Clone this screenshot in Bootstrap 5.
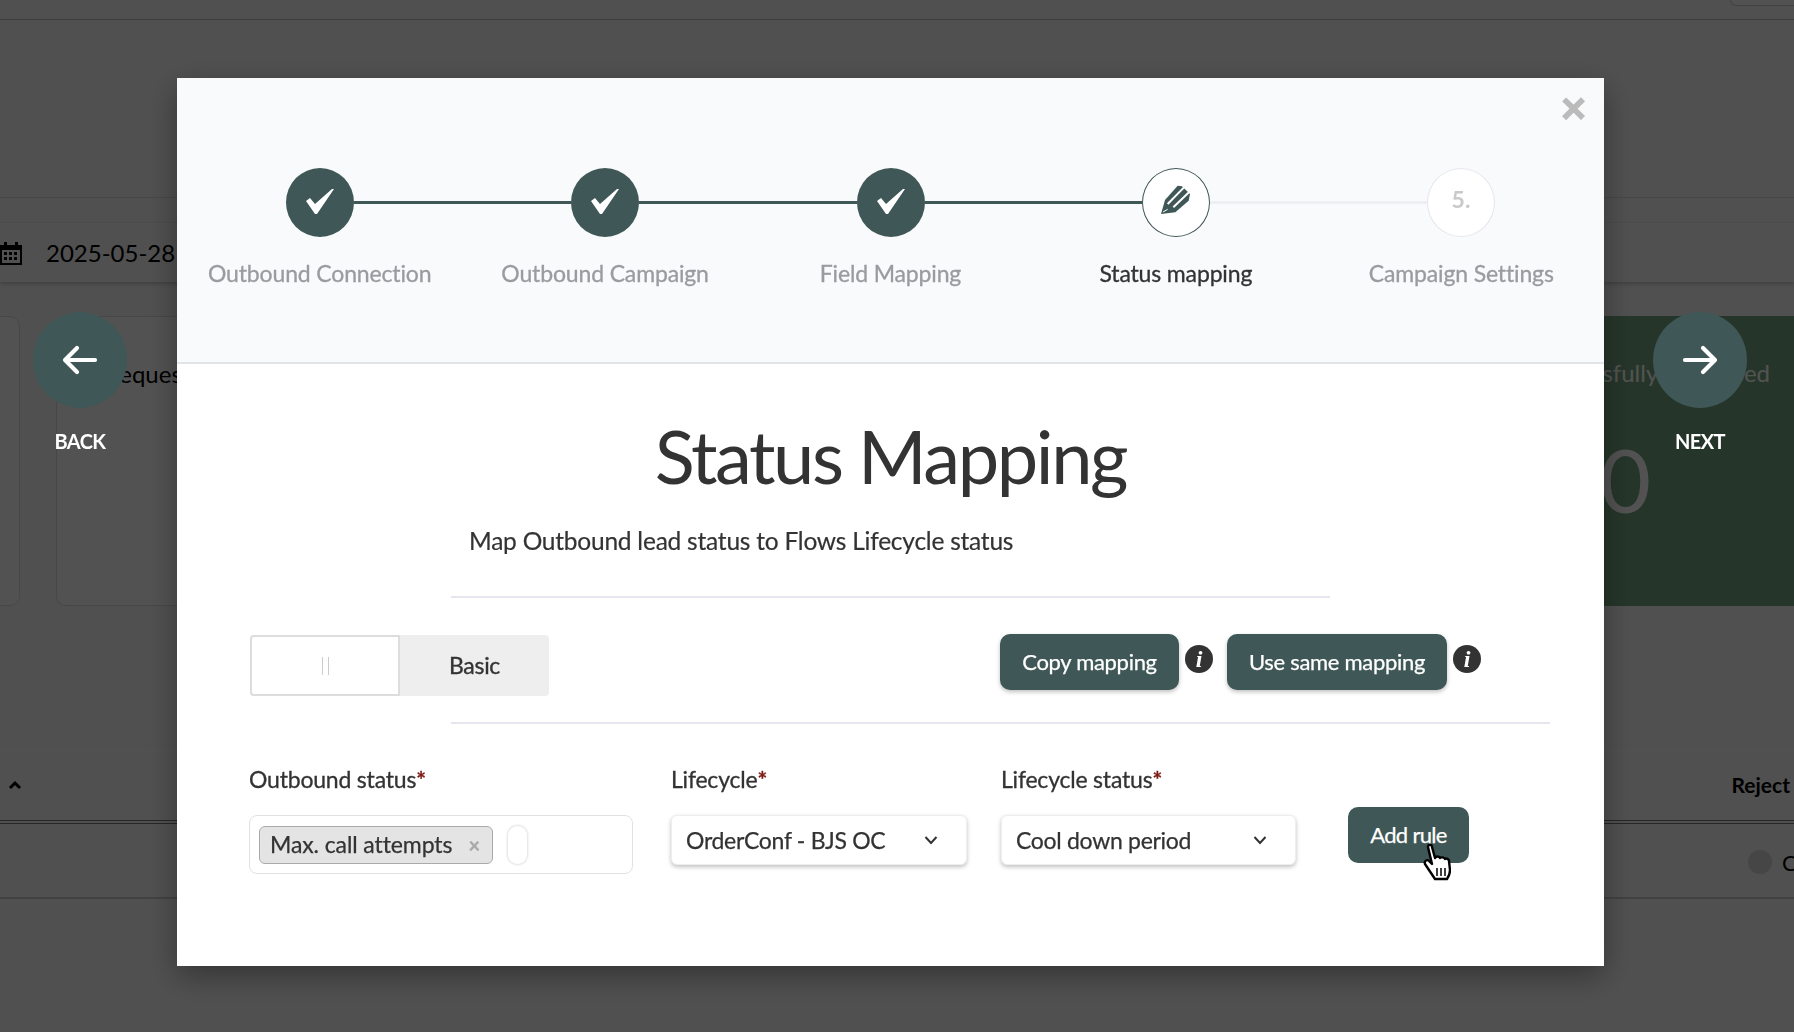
<!DOCTYPE html>
<html lang="en">
<head>
<meta charset="utf-8">
<title>Status Mapping</title>
<link href="https://cdn.jsdelivr.net/npm/bootstrap@5.3.0/dist/css/bootstrap.min.css" rel="stylesheet">
<style>
html,body{height:100%;overflow:hidden}
body{font-family:"Lato","Liberation Sans",sans-serif;background:#f7f7f7;color:#333}
.bg-top{height:20px;border-bottom:1px solid #bbb}
.bg-chip{width:80px;height:6px;margin-left:1730px;background:#fff;border:1px solid #ccc;border-top:0;border-radius:0 0 0 10px}
.bg-gap1{height:178px;border-bottom:1px solid #ddd}
.bg-gap2{height:25px;border-bottom:1px solid #f0f0f0}
.bg-date{height:59px;gap:24px;box-shadow:0 2px 4px rgba(0,0,0,.2);color:#000;font-size:24px}
.bg-cards{height:290px;margin-top:34px;gap:36px}
.bg-card{background:#fff;border:1px solid #ddd;border-radius:10px;height:290px;font-size:24px;color:#000}
.bg-a{width:120px;margin-left:-100px}
.bg-b{width:400px;padding:39px 0 0 48px}
.bg-c{width:500px;margin-left:auto;margin-right:-10px;background:#76a683;border:0;border-radius:10px 0 0 10px;color:#fff;text-align:right;padding:39px 34px 0 0}
.bg-zero{font-size:88px;line-height:1;padding:44px 119px 0 0}
.bg-thead{margin-top:144px;height:74px;border-top:1px solid #fff;border-bottom:4px double #777;color:#000;font-size:21px;font-weight:700;padding:0 4px 2px 8px}
.bg-tr{height:75px;border-bottom:2px solid #ccc;padding:3px 0 0 1748px;gap:10px;font-size:22px;color:#000}
.bg-dot{width:24px;height:24px;border-radius:50%;background:#d8d8d8;flex:none}
.modal-backdrop.show.dim{background:#000;opacity:.68}

.wiz-side{position:absolute;top:312px;width:94px;color:#fff;text-align:center;z-index:1056;font-size:20px;font-weight:700;letter-spacing:-.6px}
.wiz-back{left:33px}.wiz-next{left:1653px}
.wiz-disc{width:94px;height:96px;border-radius:50%;background:#3f5756;margin-bottom:18px}

.wiz-dialog{width:1427px;max-width:none;margin:78px 0 0 177px}
.wiz-panel{background:#fff;height:888px;box-shadow:0 10px 30px rgba(0,0,0,.35);position:relative}
.wiz-close{position:absolute;top:9px;right:18px;font-size:43px;line-height:1;color:#bbb;font-weight:700;background:none;border:0;padding:0;font-family:"Liberation Sans",sans-serif;-webkit-text-stroke:1px #bbb}
.wiz-head{background:#f9fafc;height:286px;border-bottom:2px solid #e3e3ea;padding-top:90px}
.wiz-track{padding:0 109px}
.wiz-node{width:68px;height:69px;border-radius:50%;flex:none;background:#3f5756}
.wiz-node svg.tick{margin-bottom:3px}
.wiz-node svg.pen{margin-bottom:6px}
.wiz-node.cur{background:#fff;border:1px solid #3f5756}
.wiz-node.todo{background:#fff;border:1px solid #e6e6ee;color:#c9c9c9;font-weight:700;font-size:23px;padding-bottom:6px}
.wiz-line{flex:1;height:3px;background:#3f5756}
.wiz-line.off{background:#eeeff2}
.wiz-labels{margin-top:22px}
.wiz-lab{width:20%;text-align:center;font-size:23px;line-height:28px;color:#9b9b9f;letter-spacing:-.15px;-webkit-text-stroke:.3px currentColor}
.wiz-lab.cur{color:#333}

.wiz-title{font-size:74px;line-height:84px;font-weight:400;text-align:center;color:#333;margin:50px 0 0;letter-spacing:-2.4px}
.wiz-desc{font-size:24.5px;line-height:30px;margin:28px 0 0 292px;letter-spacing:-.23px;color:#333;-webkit-text-stroke:.2px currentColor}
.wiz-rule{border-top:2px solid #e6e6ee;margin:40px 0 0 274px;width:879px}
.wiz-rule.wide{width:1099px;margin-top:25px}
.wiz-tools{margin:37px 0 0 73px;height:62px}
.wiz-seg{width:299px;height:61px;background:#eee;border-radius:4px;font-size:23px;letter-spacing:-.3px;-webkit-text-stroke:.35px currentColor}
.wiz-seg-on{width:150px;height:61px;background:#fff;border:2px solid #ddd;border-radius:4px 0 0 4px;gap:5px}
.wiz-seg-on i{width:1px;height:18px;background:#ccc}
.wiz-seg-off{width:149px;text-align:center}
.wiz-actions{margin-left:451px;margin-top:-1px}
.wiz-btn{background:#3f5756;border:0;color:#fff;font-size:22px;line-height:26px;border-radius:10px;height:56px;padding:0;box-shadow:0 2px 4px rgba(0,0,0,.25);letter-spacing:-.3px;-webkit-text-stroke:.25px currentColor}
.wiz-btn:hover{background:#3f5756;color:#fff}
.w-copy{width:179px}.w-same{width:220px}.w-add{width:121px;box-shadow:none;margin-left:52px;margin-top:43px;letter-spacing:-.7px}
.wiz-info{width:28px;height:28px;border-radius:50%;background:#333;color:#fff;font:italic 700 24px/28px "Liberation Serif",serif;text-align:center;margin:11px 0 0 6px}
.w-gap{margin-left:14px}

.wiz-form{margin:40px 0 0 72px}
.wiz-f1{width:384px;margin-right:38px}.wiz-f2{width:296px;margin-right:34px}.wiz-f3{width:295px}
.wiz-flabel{font-size:23px;line-height:30px;margin:0 0 21px;letter-spacing:-.2px;color:#333;display:block;-webkit-text-stroke:.3px currentColor}
.wiz-flabel b{color:#7d1a14;font-weight:700}
.wiz-multi{height:59px;border:1px solid #e2e2e6;border-radius:8px;padding:9px}
.wiz-tag{width:234px;height:38px;background:#e4e4e4;border:1px solid #aaa;border-radius:6px;font-size:23px;letter-spacing:-.1px;padding:0 10px;-webkit-text-stroke:.25px currentColor}
.wiz-tag-x{color:#aaa;font-size:20px;font-weight:900;margin-left:auto;margin-right:2px}
.wiz-pill{width:19px;height:38px;border-radius:9px;background:#fff;box-shadow:0 0 3px rgba(0,0,0,.25);margin-left:15px}
.wiz-select{height:50px;border:1px solid #eee;border-radius:6px;box-shadow:0 2px 4px rgba(0,0,0,.25);font-size:23px;padding:0 28px 0 14px;letter-spacing:-.3px;background:#fff;-webkit-text-stroke:.25px currentColor}
.wiz-hand{position:absolute;left:1246px;top:766px;width:28px;height:38px}
</style>
</head>
<body>
<div class="bg-top"><div class="bg-chip"></div></div>
<div class="bg-gap1"></div>
<div class="bg-gap2"></div>
<div class="bg-date d-flex align-items-center">
  <svg width="22" height="24" viewBox="0 0 22 24" aria-hidden="true"><path fill="none" stroke="#000" stroke-width="2" d="M1 5h20v18H1z"/><path fill="#000" d="M1 5h20v4H1zM4 1h3v5H4zM15 1h3v5h-3zM4 11h3v3H4zM9 11h3v3H9zM14 11h3v3h-3zM4 16h3v3H4zM9 16h3v3H9zM14 16h3v3h-3z"/></svg>
  <span>2025-05-28</span>
</div>
<div class="bg-cards d-flex">
  <div class="bg-card bg-a"></div>
  <div class="bg-card bg-b">Requests</div>
  <div class="bg-card bg-c">Successfully processed<div class="bg-zero">0</div></div>
</div>
<div class="bg-thead d-flex align-items-center justify-content-between">
  <svg width="14" height="10" viewBox="0 0 14 10" aria-hidden="true"><path fill="none" stroke="#000" stroke-width="3" d="M2 8l5-5 5 5"/></svg>
  <span class="text-nowrap">Reject</span>
</div>
<div class="bg-tr d-flex align-items-center"><span class="bg-dot"></span><span>C</span></div>

<div class="modal-backdrop show dim"></div>

<div class="wiz-side wiz-back">
  <div class="wiz-disc d-flex align-items-center justify-content-center"><svg width="36" height="30" viewBox="0 0 36 30" aria-hidden="true"><path fill="none" stroke="#fff" stroke-width="4.2" stroke-linecap="round" stroke-linejoin="round" d="M33 15H4M15 3L3 15l12 12"/></svg></div>
  BACK
</div>
<div class="wiz-side wiz-next">
  <div class="wiz-disc d-flex align-items-center justify-content-center"><svg width="36" height="30" viewBox="0 0 36 30" aria-hidden="true"><path fill="none" stroke="#fff" stroke-width="4.2" stroke-linecap="round" stroke-linejoin="round" d="M3 15h29M21 3l12 12-12 12"/></svg></div>
  NEXT
</div>

<div class="modal d-block" tabindex="-1">
  <div class="modal-dialog wiz-dialog">
    <div class="wiz-panel">
      <button class="wiz-close" type="button" aria-label="Close">×</button>
      <div class="wiz-head">
        <div class="wiz-track d-flex align-items-center">
          <span class="wiz-node d-flex align-items-center justify-content-center"><svg class="tick" width="30" height="26" viewBox="0 0 30 26" aria-hidden="true"><path fill="#fff" d="M1 13l4-3 5 6L27 1h2L12 26h-2z"/></svg></span>
          <span class="wiz-line"></span>
          <span class="wiz-node d-flex align-items-center justify-content-center"><svg class="tick" width="30" height="26" viewBox="0 0 30 26" aria-hidden="true"><path fill="#fff" d="M1 13l4-3 5 6L27 1h2L12 26h-2z"/></svg></span>
          <span class="wiz-line"></span>
          <span class="wiz-node d-flex align-items-center justify-content-center"><svg class="tick" width="30" height="26" viewBox="0 0 30 26" aria-hidden="true"><path fill="#fff" d="M1 13l4-3 5 6L27 1h2L12 26h-2z"/></svg></span>
          <span class="wiz-line"></span>
          <span class="wiz-node cur d-flex align-items-center justify-content-center"><svg class="pen" width="32" height="32" viewBox="182 100 96 96" aria-hidden="true"><path fill="#3f5756" d="M185 190l12-42 38-43 13 2 24 23-4 20-40 35z"/><path fill="none" stroke="#fff" stroke-width="6" d="M205 160l52-53M222 170l50-48"/><path fill="none" stroke="#fff" stroke-width="3" d="M191 184l14-8"/></svg></span>
          <span class="wiz-line off"></span>
          <span class="wiz-node todo d-flex align-items-center justify-content-center">5.</span>
        </div>
        <div class="wiz-labels d-flex">
          <div class="wiz-lab">Outbound Connection</div>
          <div class="wiz-lab">Outbound Campaign</div>
          <div class="wiz-lab">Field Mapping</div>
          <div class="wiz-lab cur">Status mapping</div>
          <div class="wiz-lab">Campaign Settings</div>
        </div>
      </div>
      <h1 class="wiz-title">Status Mapping</h1>
      <p class="wiz-desc">Map Outbound lead status to Flows Lifecycle status</p>
      <div class="wiz-rule"></div>
      <div class="wiz-tools d-flex">
        <div class="wiz-seg d-flex align-items-center">
          <div class="wiz-seg-on d-flex align-items-center justify-content-center"><i></i><i></i></div>
          <div class="wiz-seg-off">Basic</div>
        </div>
        <div class="wiz-actions d-flex align-items-start">
          <button class="btn wiz-btn w-copy" type="button">Copy mapping</button>
          <span class="wiz-info">i</span>
          <button class="btn wiz-btn w-same w-gap" type="button">Use same mapping</button>
          <span class="wiz-info">i</span>
        </div>
      </div>
      <div class="wiz-rule wide"></div>
      <div class="wiz-form d-flex align-items-start">
        <div class="wiz-f1">
          <label class="wiz-flabel">Outbound status<b>*</b></label>
          <div class="wiz-multi d-flex align-items-center">
            <span class="wiz-tag d-flex align-items-center">Max. call attempts<span class="wiz-tag-x">×</span></span>
            <span class="wiz-pill"></span>
          </div>
        </div>
        <div class="wiz-f2">
          <label class="wiz-flabel">Lifecycle<b>*</b></label>
          <div class="wiz-select d-flex align-items-center justify-content-between">OrderConf - BJS OC
            <svg width="14" height="10" viewBox="0 0 14 10" aria-hidden="true"><path fill="none" stroke="#333" stroke-width="2" d="M1.5 2l5.5 6 5.5-6"/></svg></div>
        </div>
        <div class="wiz-f3">
          <label class="wiz-flabel">Lifecycle status<b>*</b></label>
          <div class="wiz-select d-flex align-items-center justify-content-between">Cool down period
            <svg width="14" height="10" viewBox="0 0 14 10" aria-hidden="true"><path fill="none" stroke="#333" stroke-width="2" d="M1.5 2l5.5 6 5.5-6"/></svg></div>
        </div>
        <button class="btn wiz-btn w-add" type="button">Add rule</button>
      </div>
      <svg class="wiz-hand" viewBox="0 0 28 38" aria-hidden="true"><path fill="#fff" stroke="#000" stroke-width="2.4" stroke-linejoin="round" d="M5 3c0-3 4-3 4 0l3 11c1-2 4-2 5 0 1-1 4-1 5 1 1-1 4 0 4 2l1 9c0 4-1 6-3 9H12L2 20c-1-3 2-5 4-3l3 3z"/><path stroke="#000" stroke-width="1.5" d="M14 24v8M18 24v8M22 24v8"/></svg>
    </div>
  </div>
</div>
<script src="https://cdn.jsdelivr.net/npm/bootstrap@5.3.0/dist/js/bootstrap.bundle.min.js"></script>
</body>
</html>
